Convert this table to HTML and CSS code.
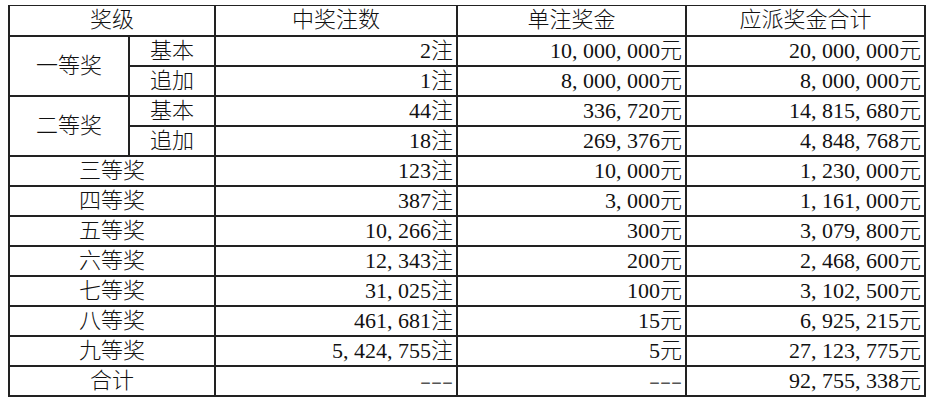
FILE: index.html
```html
<!DOCTYPE html>
<html lang="zh-CN">
<head>
<meta charset="utf-8">
<title>开奖详情</title>
<link rel="stylesheet" href="styles.css">
</head>
<body>
<table class="prize">
  <colgroup>
    <col class="c-a"><col class="c-b"><col class="c-c"><col class="c-d"><col class="c-e">
  </colgroup>
  <thead>
    <tr>
      <th colspan="2">奖级</th>
      <th>中奖注数</th>
      <th>单注奖金</th>
      <th>应派奖金合计</th>
    </tr>
  </thead>
  <tbody>
    <tr>
      <td class="lvl" rowspan="2">一等奖</td>
      <td class="sub">基本</td>
      <td class="num">2注</td>
      <td class="num">10<span class="cm">,</span>000<span class="cm">,</span>000元</td>
      <td class="num">20<span class="cm">,</span>000<span class="cm">,</span>000元</td>
    </tr>
    <tr>
      <td class="sub">追加</td>
      <td class="num">1注</td>
      <td class="num">8<span class="cm">,</span>000<span class="cm">,</span>000元</td>
      <td class="num">8<span class="cm">,</span>000<span class="cm">,</span>000元</td>
    </tr>
    <tr>
      <td class="lvl" rowspan="2">二等奖</td>
      <td class="sub">基本</td>
      <td class="num">44注</td>
      <td class="num">336<span class="cm">,</span>720元</td>
      <td class="num">14<span class="cm">,</span>815<span class="cm">,</span>680元</td>
    </tr>
    <tr>
      <td class="sub">追加</td>
      <td class="num">18注</td>
      <td class="num">269<span class="cm">,</span>376元</td>
      <td class="num">4<span class="cm">,</span>848<span class="cm">,</span>768元</td>
    </tr>
    <tr>
      <td class="lvl" colspan="2">三等奖</td>
      <td class="num">123注</td>
      <td class="num">10<span class="cm">,</span>000元</td>
      <td class="num">1<span class="cm">,</span>230<span class="cm">,</span>000元</td>
    </tr>
    <tr>
      <td class="lvl" colspan="2">四等奖</td>
      <td class="num">387注</td>
      <td class="num">3<span class="cm">,</span>000元</td>
      <td class="num">1<span class="cm">,</span>161<span class="cm">,</span>000元</td>
    </tr>
    <tr>
      <td class="lvl" colspan="2">五等奖</td>
      <td class="num">10<span class="cm">,</span>266注</td>
      <td class="num">300元</td>
      <td class="num">3<span class="cm">,</span>079<span class="cm">,</span>800元</td>
    </tr>
    <tr>
      <td class="lvl" colspan="2">六等奖</td>
      <td class="num">12<span class="cm">,</span>343注</td>
      <td class="num">200元</td>
      <td class="num">2<span class="cm">,</span>468<span class="cm">,</span>600元</td>
    </tr>
    <tr>
      <td class="lvl" colspan="2">七等奖</td>
      <td class="num">31<span class="cm">,</span>025注</td>
      <td class="num">100元</td>
      <td class="num">3<span class="cm">,</span>102<span class="cm">,</span>500元</td>
    </tr>
    <tr>
      <td class="lvl" colspan="2">八等奖</td>
      <td class="num">461<span class="cm">,</span>681注</td>
      <td class="num">15元</td>
      <td class="num">6<span class="cm">,</span>925<span class="cm">,</span>215元</td>
    </tr>
    <tr>
      <td class="lvl" colspan="2">九等奖</td>
      <td class="num">5<span class="cm">,</span>424<span class="cm">,</span>755注</td>
      <td class="num">5元</td>
      <td class="num">27<span class="cm">,</span>123<span class="cm">,</span>775元</td>
    </tr>
    <tr>
      <td class="lvl" colspan="2">合计</td>
      <td class="num"><span class="dash">---</span></td>
      <td class="num"><span class="dash">---</span></td>
      <td class="num">92<span class="cm">,</span>755<span class="cm">,</span>338元</td>
    </tr>
  </tbody>
</table>
</body>
</html>
```
FILE: styles.css
```css
html, body {
  margin: 0;
  padding: 0;
  background: #ffffff;
}

body {
  padding: 5px 0 0 8px;
}

.prize {
  border-collapse: collapse;
  table-layout: fixed;
  width: 916px;
  font-family: "Liberation Serif", "Noto Sans CJK SC", serif;
  font-size: 22px;
  font-weight: 300;
  color: #111111;
}

.c-a { width: 120px; }
.c-b { width: 86px; }
.c-c { width: 242px; }
.c-d { width: 229px; }
.c-e { width: 239px; }

.prize tr {
  height: 30px;
}

.prize th,
.prize td {
  border: 2px solid #222222;
  padding: 0 3px;
  line-height: 26px;
  white-space: nowrap;
  overflow: hidden;
  vertical-align: middle;
}

.prize thead th {
  border-top-width: 1px;
  font-weight: 300;
  text-align: center;
}

.lvl,
.sub {
  text-align: center;
}

.num {
  text-align: right;
}

.cm {
  padding-right: 0.25em;
}

.dash {
  display: inline-block;
  color: #555555;
  transform: scaleX(1.5);
  transform-origin: right center;
}
```
